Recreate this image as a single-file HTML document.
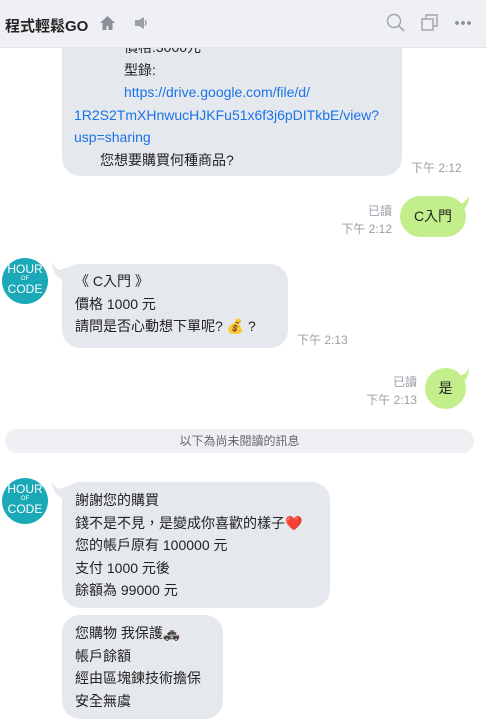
<!DOCTYPE html>
<html><head><meta charset="utf-8"><style>
*{margin:0;padding:0;box-sizing:border-box}
body{width:486px;height:723px;overflow:hidden;background:#fff;font-family:"Liberation Sans","Noto Sans CJK TC",sans-serif;font-size:14px;color:#222;position:relative}
.a{position:absolute}
.b{position:absolute;background:#e5e8ec;border-radius:18px;line-height:22.5px;padding:0 13px}
.g{position:absolute;background:#c2ef8c;border-radius:21px;text-align:center}
.t{position:absolute;color:#9a9ea6;font-size:12px;line-height:18px;text-align:right}
.av{position:absolute;left:2px;width:46px;height:46px;border-radius:50%;background:#1ba9b8;color:#fff;text-align:center;font-size:12px;line-height:11px;padding-top:6px}
.av small{font-size:6px;line-height:9px;display:block}
a{color:#1a73e8}
</style></head><body>
<div class="b" style="left:62px;top:20px;width:340px;height:156px;padding:0 12px">
<div style="padding-left:50px;margin-top:16px">價格:3000元</div>
<div style="padding-left:50px">型錄:</div>
<div style="padding-left:50px"><a>https://drive.google.com/file/d/</a></div>
<div><a>1R2S2TmXHnwucHJKFu51x6f3j6pDITkbE/view?</a></div>
<div><a>usp=sharing</a></div>
<div style="padding-left:26px">您想要購買何種商品?</div>
</div>
<div class="t" style="left:395px;top:159px;width:70px;text-align:left;padding-left:16px">下午 2:12</div>
<div class="a" style="left:0;top:0;width:486px;height:48px;background:#eef0f4;border-bottom:1px solid #dfe2e8"></div>
<div class="a" style="left:5px;top:15px;font-size:15px;font-weight:bold;color:#222">程式輕鬆GO</div>
<svg class="a" style="left:99px;top:15px" width="17" height="16" viewBox="0 0 17 16"><path d="M8.5 1L1 8h2.5v7h4v-4h2v4h4V8H16z" fill="#8a8f99"/></svg>
<svg class="a" style="left:133px;top:15px" width="16" height="16" viewBox="0 0 16 16"><path d="M2 5h4l5-3v12l-5-3H2z" fill="#9aa0a8"/><path d="M12 5.5q2 2.5 0 5" stroke="#9aa0a8" fill="none" stroke-width="1.5"/></svg>
<svg class="a" style="left:386px;top:13px" width="20" height="20" viewBox="0 0 20 20"><circle cx="8" cy="8" r="6.5" stroke="#a0a4ab" stroke-width="1.4" fill="none"/><path d="M13 13l5 5" stroke="#a0a4ab" stroke-width="1.6"/></svg>
<svg class="a" style="left:421px;top:14px" width="18" height="18" viewBox="0 0 18 18"><rect x="1" y="5" width="11" height="11" stroke="#a0a4ab" stroke-width="1.4" fill="none"/><path d="M5 5V1h11v11h-4" stroke="#a0a4ab" stroke-width="1.4" fill="none"/></svg>
<div class="a" style="left:454px;top:21px;width:18px;height:4px;background:radial-gradient(circle,#8a8f99 1.8px,transparent 2px) 0 0/6px 4px"></div>

<div class="t" style="left:300px;top:202px;width:92px">已讀<br>下午 2:12</div>
<svg class="a" style="left:448px;top:196px" width="22" height="20"><path d="M0 4Q8 6 12 8Q18 6 21 0Q21 12 10 18Z" fill="#c2ef8c"/></svg>
<div class="g" style="left:400px;top:196px;width:66px;height:41px;line-height:41px">C入門</div>

<div class="av" style="top:258px">HOUR<small>OF</small>CODE</div>
<svg class="a" style="left:51px;top:262px" width="22" height="20"><path d="M21 4Q13 6 9 8Q3 6 1 0Q1 12 12 18Z" fill="#e5e8ec"/></svg>
<div class="b" style="left:62px;top:264px;width:226px;height:84px;padding-top:6px">《 C入門 》<br>價格 1000 元<br>請問是否心動想下單呢? 💰 ?</div>
<div class="t" style="left:290px;top:331px;width:70px;text-align:left;padding-left:7px">下午 2:13</div>

<div class="t" style="left:320px;top:373px;width:97px">已讀<br>下午 2:13</div>
<svg class="a" style="left:448px;top:368px" width="22" height="20"><path d="M0 4Q8 6 12 8Q18 6 21 0Q21 12 10 18Z" fill="#c2ef8c"/></svg>
<div class="g" style="left:425px;top:368px;width:41px;height:41px;line-height:41px">是</div>

<div class="a" style="left:5px;top:429px;width:469px;height:24px;border-radius:12px;background:#eef0f3;text-align:center;font-size:12px;line-height:24px;color:#666">以下為尚未閱讀的訊息</div>

<div class="av" style="top:478px">HOUR<small>OF</small>CODE</div>
<svg class="a" style="left:51px;top:481px" width="22" height="20"><path d="M21 4Q13 6 9 8Q3 6 1 0Q1 12 12 18Z" fill="#e5e8ec"/></svg>
<div class="b" style="left:62px;top:482px;width:268px;height:126px;padding-top:7px">謝謝您的購買<br>錢不是不見，是變成你喜歡的樣子❤️<br>您的帳戶原有 100000 元<br>支付 1000 元後<br>餘額為 99000 元</div>
<div class="b" style="left:62px;top:615px;width:161px;height:104px;padding-top:7px">您購物 我保護🚓<br>帳戶餘額<br>經由區塊鍊技術擔保<br>安全無虞</div>
</body></html>
